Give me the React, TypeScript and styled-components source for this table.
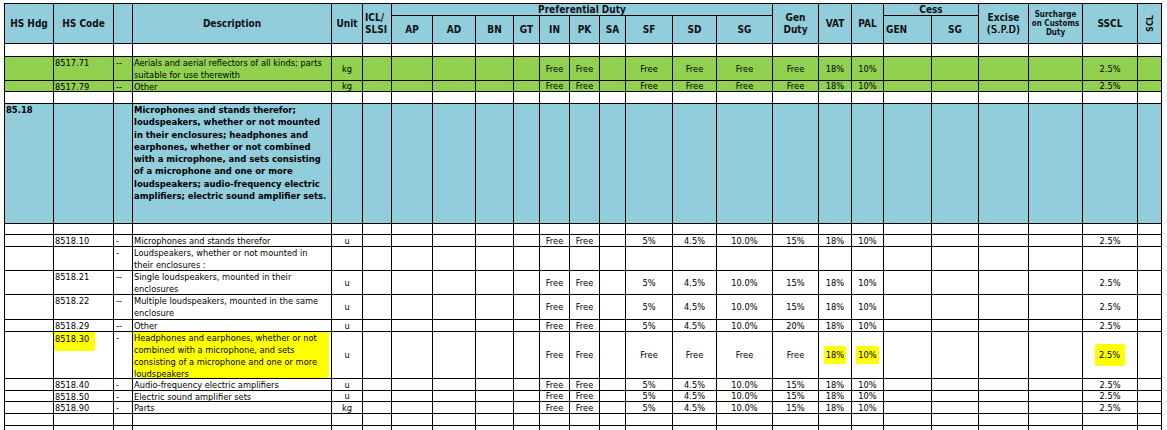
import * as React from "react"
import styled, { createGlobalStyle } from "styled-components"

const GlobalStyle = createGlobalStyle`
    html, body {
        margin: 0;
        padding: 0;
        background: #fff;
    }
    body {
        font-family: "DejaVu Sans Condensed", "DejaVu Sans", Tahoma, sans-serif;
        color: #000;
    }
`

const headBlue = "#92cddc"
const rowGreen = "#92d050"
const mark = "#ffff00"

type Tone = "white" | "green" | "blue"

const toneColor = (t?: Tone) => (t === "green" ? rowGreen : t === "blue" ? headBlue : "#fff")

const Sheet = styled.div`
    padding: 3px 0 0 4px;
`

const Grid = styled.table`
    border-collapse: collapse;
    table-layout: fixed;
    width: 1158px;
    font-size: 9.2px;
`

const Head = styled.th<{ $left?: boolean }>`
    border: 1px solid #000;
    padding: 0;
    background: ${headBlue};
    font-weight: bold;
    font-size: 10px;
    line-height: 12px;
    text-align: ${p => (p.$left ? "left" : "center")};
    vertical-align: middle;
    color: #111;
`

const HeadBox = styled.div<{ $h: number; $left?: boolean }>`
    height: ${p => p.$h}px;
    overflow: hidden;
    display: flex;
    flex-direction: column;
    justify-content: center;
    align-items: ${p => (p.$left ? "flex-start" : "center")};
    padding: 0 2px;
    white-space: nowrap;
`

const Small = styled.span`
    font-size: 8px;
    line-height: 9px;
`

const Light = styled.span`
    font-weight: normal;
    letter-spacing: 0.6px;
    color: #000;
    text-shadow: 0.4px 0 0 #000;
`

const Vertical = styled.span`
    writing-mode: vertical-rl;
    transform: rotate(180deg);
    font-size: 9px;
`

const Cell = styled.td<{ $tone?: Tone }>`
    border: 1px solid #000;
    padding: 0;
    background: ${p => toneColor(p.$tone)};
    vertical-align: top;
`

const Box = styled.div<{ $h: number; $top?: boolean; $left?: boolean; $bold?: boolean; $pad?: number }>`
    height: ${p => p.$h}px;
    overflow: hidden;
    display: flex;
    flex-direction: column;
    justify-content: ${p => (p.$top ? "flex-start" : "center")};
    align-items: ${p => (p.$left ? "flex-start" : "center")};
    padding-left: ${p => p.$pad ?? 0}px;
    font-weight: ${p => (p.$bold ? "bold" : "normal")};
    font-size: ${p => (p.$bold ? "9.4px" : "inherit")};
    line-height: ${p => (p.$bold ? "12.3px" : "12px")};
    white-space: nowrap;
`

const Marked = styled.div`
    display: flex;
    flex-direction: column;
    background: ${mark};
    align-self: stretch;
    margin: 0 2px 0 -1px;
    padding-left: 2px;
    min-height: 100%;
    border-radius: 0 0 4px 10px;
`

const Mark = styled.span<{ $wide?: boolean }>`
    background: ${mark};
    padding: ${p => (p.$wide ? "5px 5px 5px 4px" : "3px 2px")};
    border-radius: 2px;
`

const CodeMark = styled.span`
    background: ${mark};
    padding: 1px 6px 6px 1px;
    margin-left: -1px;
    border-radius: 0 0 3px 2px;
`

const widths = [49, 60, 19, 199, 31, 29, 41, 43, 38, 26, 30, 30, 26, 47, 44, 56, 46, 33, 32, 48, 47, 50, 54, 55, 24]

const keys = [
    "unit", "icl", "ap", "ad", "bn", "gt", "in", "pk", "sa", "sf", "sd", "sg",
    "gen", "vat", "pal", "cgen", "csg", "excise", "surcharge", "sscl", "scl",
] as const

type Key = (typeof keys)[number]

type Entry = {
    h: number
    tone?: Tone
    hdg?: string
    code?: string
    dash?: string
    desc?: string[]
    bold?: boolean
    vals?: Partial<Record<Key, string>>
    marks?: string[]
}

const std = (unit: string, gen = "15%"): Partial<Record<Key, string>> => ({
    unit, in: "Free", pk: "Free", sf: "5%", sd: "4.5%", sg: "10.0%",
    gen, vat: "18%", pal: "10%", sscl: "2.5%",
})

const free = (unit: string): Partial<Record<Key, string>> => ({
    unit, in: "Free", pk: "Free", sf: "Free", sd: "Free", sg: "Free",
    gen: "Free", vat: "18%", pal: "10%", sscl: "2.5%",
})

const entries: Entry[] = [
    { h: 13 },
    {
        h: 24, tone: "green", code: "8517.71", dash: "--",
        desc: ["Aerials and aerial reflectors of all kinds; parts", "suitable for use therewith"],
        vals: free("kg"),
    },
    { h: 11, tone: "green", code: "8517.79", dash: "--", desc: ["Other"], vals: free("kg") },
    { h: 12 },
    {
        h: 120, tone: "blue", hdg: "85.18", bold: true,
        desc: [
            "Microphones and stands therefor;",
            "loudspeakers, whether or not mounted",
            "in their enclosures; headphones and",
            "earphones, whether or not combined",
            "with a microphone, and sets consisting",
            "of a microphone and one or more",
            "loudspeakers; audio-frequency electric",
            "amplifiers; electric sound amplifier sets.",
        ],
    },
    { h: 11 },
    { h: 12, code: "8518.10", dash: "-", desc: ["Microphones and stands therefor"], vals: std("u") },
    { h: 24, dash: "-", desc: ["Loudspeakers, whether or not mounted in", "their enclosures :"] },
    { h: 24, code: "8518.21", dash: "--", desc: ["Single loudspeakers, mounted in their", "enclosures"], vals: std("u") },
    { h: 25, code: "8518.22", dash: "--", desc: ["Multiple loudspeakers, mounted in the same", "enclosure"], vals: std("u") },
    { h: 12, code: "8518.29", dash: "--", desc: ["Other"], vals: std("u", "20%") },
    {
        h: 47, code: "8518.30", dash: "-",
        desc: [
            "Headphones and earphones, whether or not",
            "combined with a microphone, and sets",
            "consisting of a microphone and one or more",
            "loudspeakers",
        ],
        vals: free("u"),
        marks: ["code", "desc", "vat", "pal", "sscl"],
    },
    { h: 12, code: "8518.40", dash: "-", desc: ["Audio-frequency electric amplifiers"], vals: std("u") },
    { h: 11, code: "8518.50", dash: "-", desc: ["Electric sound amplifier sets"], vals: std("u") },
    { h: 12, code: "8518.90", dash: "-", desc: ["Parts"], vals: std("kg") },
    { h: 12 },
    { h: 12 },
]

function Lines({ lines }: { lines: string[] }) {
    return (
        <>
            {lines.map((l, i) => (
                <span key={i}>{l}</span>
            ))}
        </>
    )
}

function DataRow({ e }: { e: Entry }) {
    const h = e.h - 1
    const marked = (k: string) => e.marks?.includes(k)
    return (
        <tr>
            <Cell $tone={e.tone}>
                <Box $h={h} $top $left $bold={e.bold} $pad={1}>{e.hdg}</Box>
            </Cell>
            <Cell $tone={e.tone}>
                <Box $h={h} $top $left $pad={1}>
                    {marked("code") ? <CodeMark>{e.code}</CodeMark> : e.code}
                </Box>
            </Cell>
            <Cell $tone={e.tone}>
                <Box $h={h} $top $left $pad={2}>{e.dash}</Box>
            </Cell>
            <Cell $tone={e.tone}>
                <Box $h={h} $top $left $bold={e.bold} $pad={marked("desc") ? 0 : 1}>
                    {e.desc &&
                        (marked("desc") ? (
                            <Marked>
                                <Lines lines={e.desc} />
                            </Marked>
                        ) : (
                            <Lines lines={e.desc} />
                        ))}
                </Box>
            </Cell>
            {keys.map(k => {
                const v = e.vals?.[k]
                return (
                    <Cell key={k} $tone={e.tone}>
                        <Box $h={h}>{v && marked(k) ? <Mark $wide={k === "sscl"}>{v}</Mark> : v}</Box>
                    </Cell>
                )
            })}
        </tr>
    )
}

const prefCols = ["AP", "AD", "BN", "GT", "IN", "PK", "SA", "SF", "SD", "SG"]

export default function App() {
    return (
        <>
            <GlobalStyle />
            <Sheet>
                <Grid>
                    <colgroup>
                        {widths.map((w, i) => (
                            <col key={i} style={{ width: w }} />
                        ))}
                    </colgroup>
                    <thead>
                        <tr>
                            <Head rowSpan={2}><HeadBox $h={39}>HS Hdg</HeadBox></Head>
                            <Head rowSpan={2}><HeadBox $h={39}>HS Code</HeadBox></Head>
                            <Head rowSpan={2}><HeadBox $h={39} /></Head>
                            <Head rowSpan={2}><HeadBox $h={39}>Description</HeadBox></Head>
                            <Head rowSpan={2}><HeadBox $h={39}>Unit</HeadBox></Head>
                            <Head rowSpan={2}>
                                <HeadBox $h={39} $left>
                                    <span>ICL/</span>
                                    <span>SLSI</span>
                                </HeadBox>
                            </Head>
                            <Head colSpan={10}><HeadBox $h={11}>Preferential Duty</HeadBox></Head>
                            <Head rowSpan={2}>
                                <HeadBox $h={39}>
                                    <span>Gen</span>
                                    <span>Duty</span>
                                </HeadBox>
                            </Head>
                            <Head rowSpan={2}><HeadBox $h={39}>VAT</HeadBox></Head>
                            <Head rowSpan={2}><HeadBox $h={39}>PAL</HeadBox></Head>
                            <Head colSpan={2}><HeadBox $h={11}>Cess</HeadBox></Head>
                            <Head rowSpan={2}>
                                <HeadBox $h={39}>
                                    <span>Excise</span>
                                    <Light>(S.P.D)</Light>
                                </HeadBox>
                            </Head>
                            <Head rowSpan={2}>
                                <HeadBox $h={39}>
                                    <Small>Surcharge</Small>
                                    <Small>on Customs</Small>
                                    <Small>Duty</Small>
                                </HeadBox>
                            </Head>
                            <Head rowSpan={2}><HeadBox $h={39}>SSCL</HeadBox></Head>
                            <Head rowSpan={2}>
                                <HeadBox $h={39}>
                                    <Vertical>SCL</Vertical>
                                </HeadBox>
                            </Head>
                        </tr>
                        <tr>
                            {prefCols.map(c => (
                                <Head key={c}><HeadBox $h={27}>{c}</HeadBox></Head>
                            ))}
                            <Head $left><HeadBox $h={27} $left>GEN</HeadBox></Head>
                            <Head><HeadBox $h={27}>SG</HeadBox></Head>
                        </tr>
                    </thead>
                    <tbody>
                        {entries.map((e, i) => (
                            <DataRow key={i} e={e} />
                        ))}
                    </tbody>
                </Grid>
            </Sheet>
        </>
    )
}
